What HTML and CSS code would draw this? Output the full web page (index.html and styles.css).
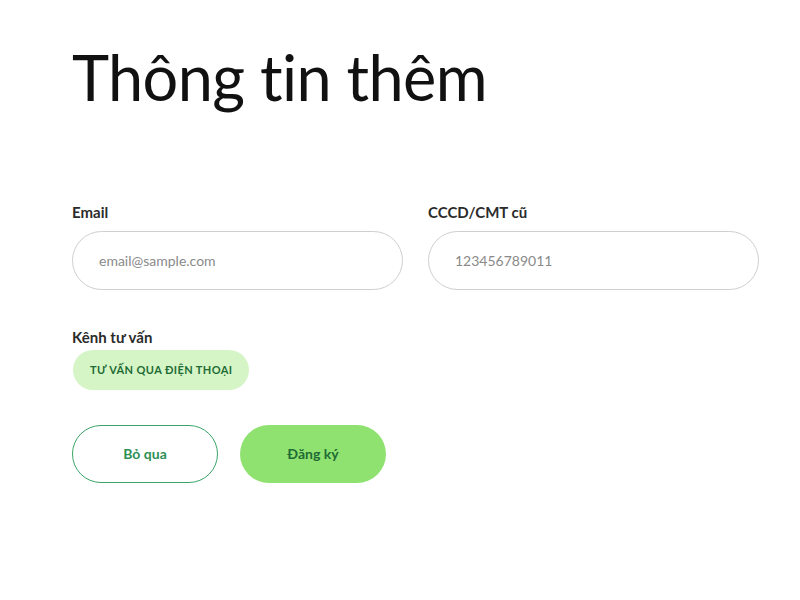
FILE: index.html
```html
<!DOCTYPE html>
<html lang="vi">
<head>
  <meta charset="UTF-8" />
  <meta name="viewport" content="width=device-width, initial-scale=1.0"/>
  <title>Thông tin thêm</title>
  <link rel="stylesheet" href="styles.css">
</head>
<body>
  <div class="form-container">
    <h1>Thông tin thêm</h1>

    <div class="field-row">
      <div class="field">
        <label for="email">Email</label>
        <input id="email" type="text" placeholder="email@sample.com" />
      </div>
      <div class="field">
        <label for="id-number">CCCD/CMT cũ</label>
        <input id="id-number" type="text" placeholder="123456789011" />
      </div>
    </div>

    <div class="channel">
      <p>Kênh tư vấn</p>
      <span class="chip">TƯ VẤN QUA ĐIỆN THOẠI</span>
    </div>

    <div class="actions">
      <button class="btn btn-outline">Bỏ qua</button>
      <button class="btn btn-primary">Đăng ký</button>
    </div>
  </div>
</body>
</html>
```

FILE: styles.css
```css
:root {
  --text-color: #111111;
  --label-color: #2b2b2b;
  --border-color: #cfcfcf;
  --placeholder-color: #8a8a8a;
  --green-dark: #1e6b35;
  --green-border: #3aa468;
  --green-light: #d5f5c6;
  --green-main: #8fe26f;
}

* {
  box-sizing: border-box;
}

body {
  margin: 0;
  background-color: #ffffff;
  color: var(--text-color);
  font-family: "Lato", "Noto Sans", sans-serif;
}

.form-container {
  width: 760px;
  padding: 39px 0 0 72px;
}

h1 {
  margin: 0 0 88px;
  font-size: 63px;
  font-weight: 400;
  line-height: 1.2;
  letter-spacing: -0.6px;
}

.field-row {
  display: flex;
  gap: 25px;
}

.field {
  width: 331px;
}

.field label,
.channel p {
  display: block;
  margin: 0 0 10px;
  font-size: 15px;
  font-weight: 700;
  color: var(--label-color);
}

.field input {
  width: 100%;
  height: 59px;
  padding: 0 26px;
  border: 1.5px solid var(--border-color);
  border-radius: 30px;
  font-family: inherit;
  font-size: 14px;
  outline: none;
}

.field input::placeholder {
  color: var(--placeholder-color);
}

.channel {
  margin-top: 38px;
}

.channel p {
  margin-bottom: 4px;
}

.chip {
  display: inline-flex;
  align-items: center;
  height: 40px;
  padding: 0 17px;
  margin-left: 1px;
  border-radius: 20px;
  background-color: var(--green-light);
  color: var(--green-dark);
  font-size: 11px;
  font-weight: 700;
  letter-spacing: 0.4px;
}

.actions {
  display: flex;
  gap: 22px;
  margin-top: 35px;
}

.btn {
  width: 146px;
  height: 58px;
  border-radius: 29px;
  font-family: inherit;
  font-size: 14px;
  font-weight: 700;
  cursor: pointer;
}

.btn-outline {
  background-color: #ffffff;
  border: 1.5px solid var(--green-border);
  color: #2f8f55;
}

.btn-primary {
  background-color: var(--green-main);
  border: 0;
  color: var(--green-dark);
}
```
